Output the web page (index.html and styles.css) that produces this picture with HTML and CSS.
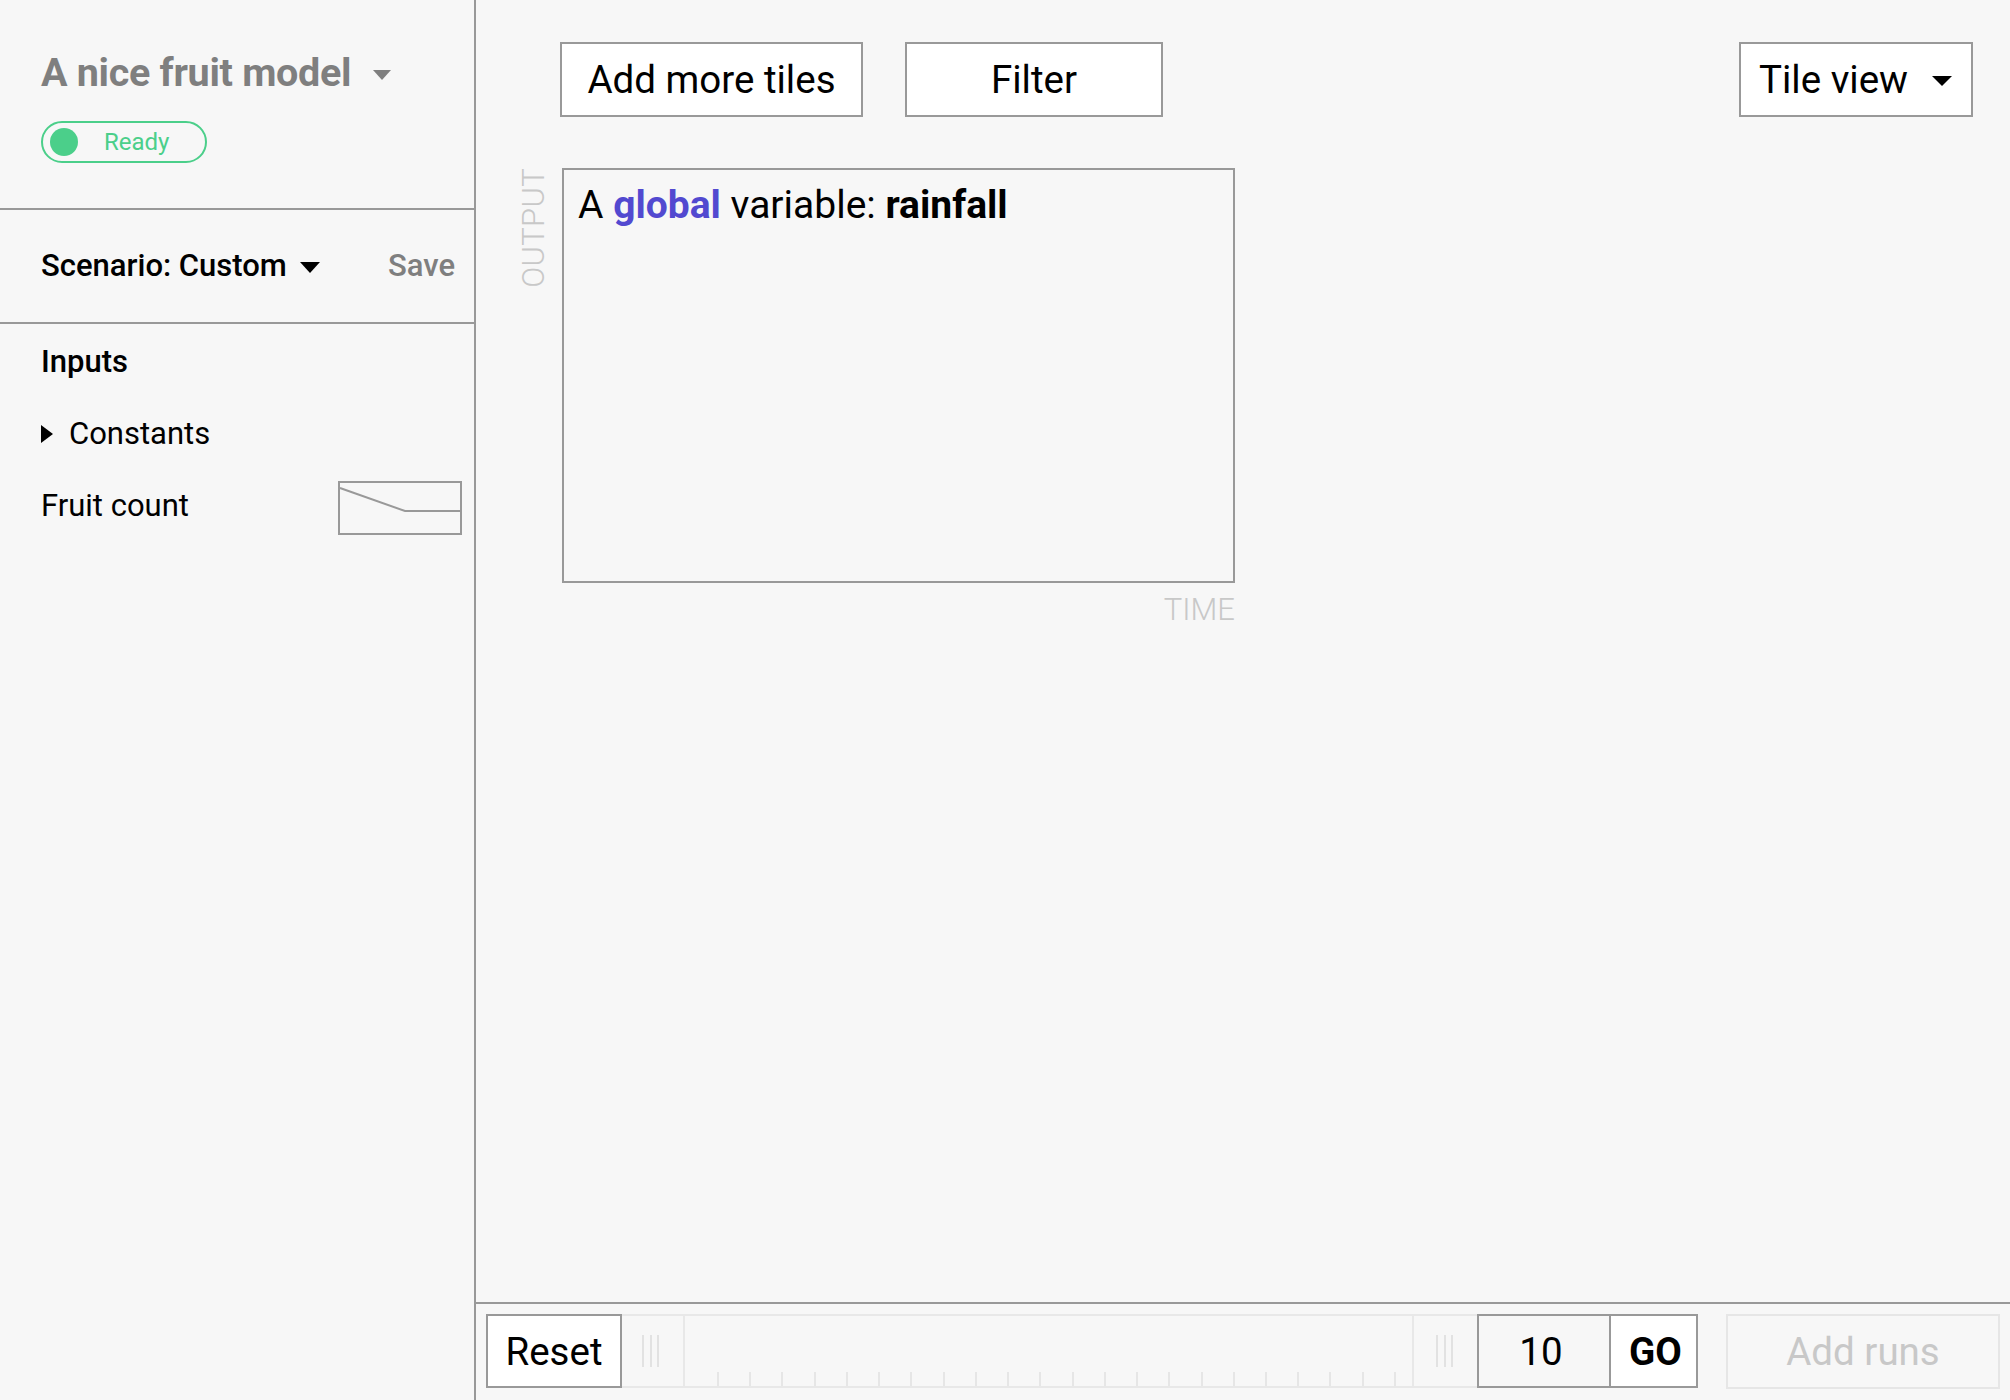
FILE: index.html
```html
<!DOCTYPE html>
<html>
<head>
<meta charset="utf-8">
<link rel="stylesheet" href="styles.css">
</head>
<body>
<div class="app">
  <aside class="sidebar">
    <div class="model-head">
      <div class="model-title">
        <span>A nice fruit model</span>
        <svg class="caret caret-gray" width="18" height="10" viewBox="0 0 18 10"><path d="M0 0H18L9 10Z"/></svg>
      </div>
      <div class="status-pill"><span class="dot"></span><span class="status-text">Ready</span></div>
    </div>
    <div class="scenario-row">
      <div class="scenario">
        <span>Scenario: Custom</span>
        <svg class="caret" width="20" height="11" viewBox="0 0 20 11"><path d="M0 0H20L10 11Z"/></svg>
      </div>
      <span class="save">Save</span>
    </div>
    <div class="inputs">
      <div class="inputs-title">Inputs</div>
      <div class="group-row">
        <svg class="tri" width="12" height="18" viewBox="0 0 12 18"><path d="M0 0L12 9L0 18Z"/></svg>
        <span>Constants</span>
      </div>
      <div class="input-row">
        <span>Fruit count</span>
        <svg class="spark" width="124" height="54" viewBox="0 0 124 54">
          <rect x="1" y="1" width="122" height="52" fill="none" stroke="#999" stroke-width="2"/>
          <polyline points="2,7 67,30 122,30" fill="none" stroke="#999" stroke-width="2"/>
        </svg>
      </div>
    </div>
  </aside>
  <main class="main">
    <div class="content">
      <div class="toolbar">
        <button class="btn btn-add">Add more tiles</button>
        <button class="btn btn-filter">Filter</button>
        <div class="spacer"></div>
        <button class="btn btn-view"><span>Tile view</span>
          <svg class="caret" width="20" height="10" viewBox="0 0 20 10"><path d="M0 0H20L10 10Z"/></svg>
        </button>
      </div>
      <div class="tile-wrap">
        <div class="y-label">OUTPUT</div>
        <div class="tile-col">
          <div class="tile">
            <div class="tile-title">A <span class="global">global</span> variable: <b>rainfall</b></div>
          </div>
          <div class="x-label">TIME</div>
        </div>
      </div>
    </div>
    <div class="runbar">
      <button class="btn ctl reset">Reset</button>
      <div class="slider">
        <div class="handle"><i></i><i></i><i></i></div>
        <div class="track">
          <div class="ticks">
            <i></i><i></i><i></i><i></i><i></i><i></i><i></i><i></i><i></i><i></i><i></i>
            <i></i><i></i><i></i><i></i><i></i><i></i><i></i><i></i><i></i><i></i><i></i>
          </div>
        </div>
        <div class="handle handle-r"><i></i><i></i><i></i></div>
      </div>
      <div class="count">10</div>
      <button class="btn ctl go">GO</button>
      <button class="btn ctl addruns">Add runs</button>
    </div>
  </main>
</div>
</body>
</html>
```
FILE: styles.css
```css
* { box-sizing: border-box; }
html, body { margin: 0; padding: 0; }
body {
  background: #f7f7f7;
  font-family: Roboto, "Liberation Sans", sans-serif;
  color: #000;
  width: 2010px;
  height: 1400px;
  overflow: hidden;
}
.app { display: flex; height: 1400px; }

/* Sidebar */
.sidebar {
  width: 476px;
  flex: none;
  border-right: 2px solid #999;
  display: flex;
  flex-direction: column;
}
.model-head {
  padding: 49px 0 45px 41px;
  border-bottom: 2px solid #999;
  height: 210px;
}
.model-title {
  display: flex;
  align-items: center;
  gap: 22px;
  font-size: 39.5px;
  line-height: 47px;
  font-weight: 700;
  color: #7f7f7f;
  letter-spacing: -0.3px;
}
.caret { fill: #000; flex: none; }
.caret-gray { fill: #7f7f7f; margin-top: 5px; }
.status-pill {
  margin-top: 25px;
  width: 166px;
  height: 42px;
  border: 2px solid #4bcf8a;
  border-radius: 21px;
  display: flex;
  align-items: center;
  padding-left: 7px;
}
.dot {
  width: 28px; height: 28px;
  border-radius: 50%;
  background: #4bcf8a;
  flex: none;
}
.status-text {
  margin-left: 26px;
  font-size: 24px;
  line-height: 28px;
  color: #4bcf8a;
}
.scenario-row {
  height: 114px;
  border-bottom: 2px solid #999;
  display: flex;
  align-items: center;
  justify-content: space-between;
  padding: 0 19px 0 41px;
  font-size: 31px;
  line-height: 36px;
  font-weight: 500;
}
.scenario { display: flex; align-items: center; gap: 13px; }
.scenario .caret { margin-top: 2px; }
.save { color: #7f7f7f; }
.inputs {
  padding: 20px 12px 0 41px;
  font-size: 31px;
  line-height: 36px;
}
.inputs-title { font-weight: 500; margin-bottom: 36px; }
.group-row { display: flex; align-items: center; margin-bottom: 29px; }
.tri { fill: #000; margin-right: 16px; flex: none; }
.input-row {
  display: flex;
  align-items: center;
  justify-content: space-between;
  height: 54px;
}
.input-row span { position: relative; top: -2px; }

/* Main */
.main {
  flex: 1;
  display: flex;
  flex-direction: column;
  min-width: 0;
}
.content {
  flex: 1;
  padding: 42px 37px 0 40px;
}
.toolbar {
  display: flex;
  align-items: center;
  padding-left: 44px;
  gap: 42px;
}
.spacer { flex: 1; }
.btn {
  font-family: Roboto, "Liberation Sans", sans-serif;
  background: #fff;
  border: 2px solid #999;
  height: 75px;
  font-size: 38.5px;
  color: #000;
  padding: 0;
  margin: 0;
  display: flex;
  align-items: center;
  justify-content: center;
}
.btn-add { width: 303px; }
.btn-filter { width: 258px; }
.btn-view {
  width: 234px;
  justify-content: flex-start;
  padding-left: 18px;
  gap: 0;
}
.btn-view span { flex: 1; text-align: left; }
.btn-view .caret { margin-right: 19px; margin-top: 2px; }

.tile-wrap {
  margin-top: 51px;
  display: flex;
  align-items: flex-start;
}
.y-label {
  writing-mode: vertical-rl;
  transform: rotate(180deg);
  font-size: 31px;
  line-height: 36px;
  font-weight: 300;
  color: #c8c8c8;
  width: 36px;
  margin-right: 10px;
  letter-spacing: 0.3px;
}
.tile-col { display: flex; flex-direction: column; }
.tile {
  width: 673px;
  height: 415px;
  border: 2px solid #999;
  padding: 13px 14px;
}
.tile-title {
  font-size: 39px;
  line-height: 44px;
}
.global { color: #5249d0; font-weight: 700; }
.tile-title b { font-weight: 700; }
.x-label {
  align-self: flex-end;
  margin-top: 9px;
  font-size: 31px;
  line-height: 36px;
  font-weight: 300;
  color: #c8c8c8;
}

/* Run bar */
.runbar {
  height: 98px;
  border-top: 2px solid #999;
  display: flex;
  align-items: flex-start;
  padding: 10px 10px 0 10px;
}
.ctl { height: 74px; }
.reset { width: 136px; }
.slider {
  width: 855px;
  height: 74px;
  display: flex;
  border-top: 2px solid #e8e8e8;
  border-bottom: 2px solid #e8e8e8;
}
.handle {
  width: 61px;
  display: flex;
  justify-content: flex-start;
  gap: 5.5px;
  padding: 19px 0 0 20px;
}
.handle i {
  display: block;
  width: 2px;
  height: 32px;
  background: #e2e2e2;
}
.handle-r { width: 63px; padding-left: 22px; }
.track {
  width: 731px;
  border-left: 2px solid #e8e8e8;
  border-right: 2px solid #e8e8e8;
  display: flex;
  align-items: flex-end;
  padding: 0 16px 0 32px;
}
.ticks {
  flex: 1;
  display: flex;
  justify-content: space-between;
  height: 14px;
}
.ticks i {
  display: block;
  width: 2px;
  height: 14px;
  background: #e6e6e6;
}
.count {
  width: 134px;
  height: 74px;
  border: 2px solid #999;
  display: flex;
  align-items: center;
  justify-content: center;
  font-size: 38.5px;
  padding-right: 6px;
}
.go {
  width: 87px;
  border-left: none;
  font-weight: 700;
  padding-left: 4px;
}
.addruns {
  margin-left: 28px;
  width: 274px;
  height: 75px;
  background: transparent;
  border-color: #e6e6e6;
  color: #c8c8c8;
}
```
